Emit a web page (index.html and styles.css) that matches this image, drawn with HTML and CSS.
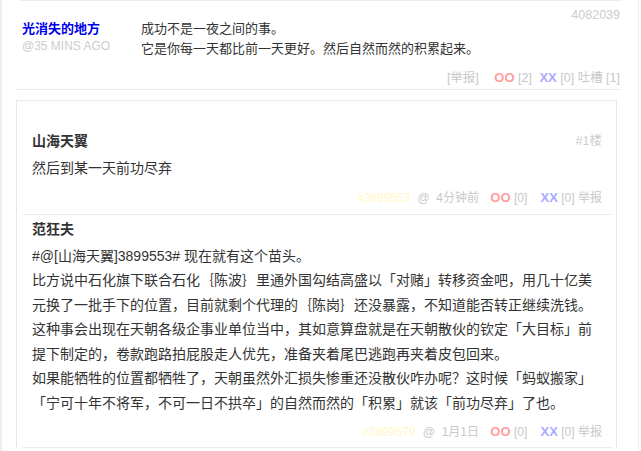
FILE: index.html
```html
<!DOCTYPE html>
<html lang="zh">
<head>
<meta charset="utf-8">
<title>吐槽</title>
<link rel="stylesheet" href="styles.css">
</head>
<body>
<div class="page">
  <div class="thread">
    <div class="post">
      <div class="post-head">
        <div class="author">
          <div class="author-name">光消失的地方</div>
          <div class="author-time">@35 MINS AGO</div>
        </div>
        <div class="post-text">
          <p>成功不是一夜之间的事。</p>
          <p>它是你每一天都比前一天更好。然后自然而然的积累起来。</p>
        </div>
        <div class="post-id">4082039</div>
      </div>
      <div class="post-foot">
        <span class="gray">[举报]</span>
        <span class="oo">OO</span><span class="gray"> [2]</span>
        <span class="xx">XX</span><span class="gray"> [0]</span>
        <span class="gray">吐槽 [1]</span>
      </div>
    </div>
    <div class="divider"></div>
    <div class="tucao-box">
      <div class="tc-item tc-first">
        <div class="tc-head">
          <span class="tc-name">山海天翼</span>
          <span class="tc-floor">#1楼</span>
        </div>
        <div class="tc-text">然后到某一天前功尽弃</div>
        <div class="tc-foot">
          <span class="tc-id">#3899553</span>
          <span class="gray">@&nbsp; 4分钟前</span>
          <span class="oo">OO</span><span class="gray"> [0]</span>
          <span class="xx">XX</span><span class="gray"> [0]</span>
          <span class="gray">举报</span>
        </div>
      </div>
      <div class="tc-item tc-second">
        <div class="tc-head">
          <span class="tc-name">范狂夫</span>
        </div>
        <div class="tc-text">#@[山海天翼]3899553# 现在就有这个苗头。<br>比方说中石化旗下联合石化｛陈波｝里通外国勾结高盛以「对赌」转移资金吧，用几十亿美元换了一批手下的位置，目前就剩个代理的｛陈岗｝还没暴露，不知道能否转正继续洗钱。<br>这种事会出现在天朝各级企事业单位当中，其如意算盘就是在天朝散伙的钦定「大目标」前提下制定的，卷款跑路拍屁股走人优先，准备夹着尾巴逃跑再夹着皮包回来。<br>如果能牺牲的位置都牺牲了，天朝虽然外汇损失惨重还没散伙咋办呢？这时候「蚂蚁搬家」「宁可十年不将军，不可一日不拱卒」的自然而然的「积累」就该「前功尽弃」了也。</div>
        <div class="tc-foot">
          <span class="tc-id">#3899579</span>
          <span class="gray">@&nbsp; 1月1日</span>
          <span class="oo">OO</span><span class="gray"> [0]</span>
          <span class="xx">XX</span><span class="gray"> [0]</span>
          <span class="gray">举报</span>
        </div>
      </div>
    </div>
  </div>
</div>
</body>
</html>
```

FILE: styles.css
```css
* { box-sizing: border-box; }
html, body { margin: 0; padding: 0; background: #fff; }
body {
  font-family: "Liberation Sans", "Noto Sans CJK SC", sans-serif;
  color: #333;
  text-spacing-trim: space-all;
}
p { margin: 0; }
.page {
  width: 639px;
  height: 451px;
  overflow: hidden;
  border-left: 2px solid #eeeeee;
  border-right: 1px solid #f2f2f2;
}
.thread {
  margin-left: 14px;
  width: 606px;
}
.post {
  margin-left: 4px;
  border-top: 1px solid #eeeeee;
  padding: 18px 2px 1px 2px;
}
.post-head {
  display: flex;
  align-items: flex-start;
}
.author {
  width: 119px;
  flex: none;
}
.author-name {
  font-size: 13px;
  line-height: 20px;
  font-weight: bold;
  color: #0000ee;
}
.author-time {
  font-size: 12px;
  line-height: 14px;
  color: #cccccc;
}
.post-text {
  flex: 1;
  font-size: 13px;
  line-height: 19.5px;
  color: #333;
}
.post-id {
  margin-top: -14px;
  font-size: 12.5px;
  line-height: 20px;
  color: #cccccc;
}
.post-foot {
  margin-top: 10px;
  text-align: right;
  font-size: 12.5px;
  line-height: 20px;
  color: #cccccc;
}
.gray { color: #c8c8c8; }
.oo { color: #ff9d9d; font-weight: bold; margin-left: 8px; }
.xx { color: #aaaaff; font-weight: bold; margin-left: 4px; }
.post-foot .oo { margin-left: 12px; font-size: 13px; }
.post-foot .xx { font-size: 13px; }
.divider {
  height: 1px;
  background: #eeeeee;
}
.tucao-box {
  margin-top: 10px;
  width: 601px;
  border: 1px solid #e8e8e8;
  border-bottom: none;
  padding: 0 4px 0 5px;
}
.tc-item {
  border-bottom: 1px solid #eeeeee;
  padding: 0 10px;
}
.tc-first { padding-top: 30px; padding-bottom: 6px; }
.tc-second { padding-top: 4px; padding-bottom: 5px; }
.tc-head {
  display: flex;
  justify-content: space-between;
  align-items: center;
  line-height: 20px;
}
.tc-name {
  font-size: 14px;
  font-weight: bold;
  color: #333;
}
.tc-floor {
  font-size: 12.5px;
  color: #cccccc;
}
.tc-text {
  margin-top: 5px;
  font-size: 14px;
  line-height: 24.5px;
  color: #333;
}
.tc-foot {
  margin-top: 7px;
  text-align: right;
  font-size: 12px;
  line-height: 20px;
}
.tc-id { color: #fff7c8; margin-right: 4px; }
.tc-foot .oo { margin-left: 8px; font-size: 13px; }
.tc-foot .xx { margin-left: 10px; font-size: 13px; }
```
